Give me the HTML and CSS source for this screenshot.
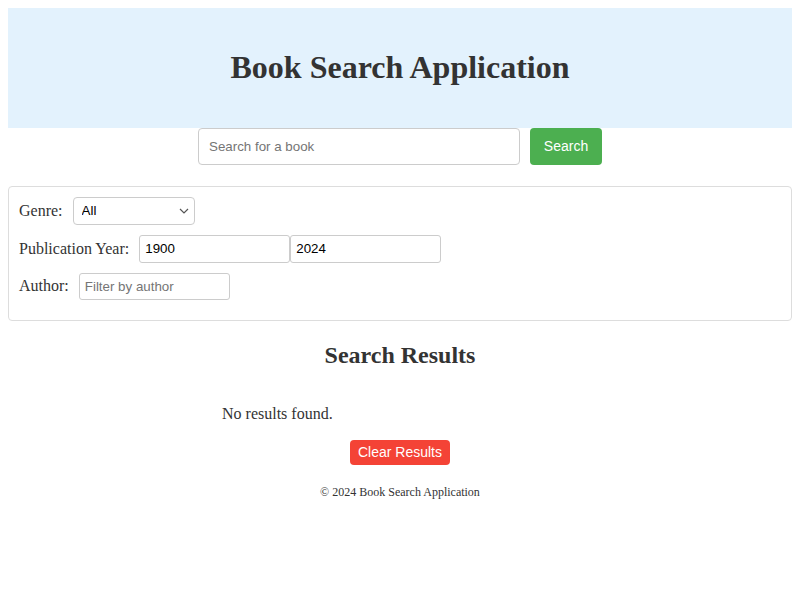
FILE: index.html
```html
<!DOCTYPE html>
<html lang="en">
<head>
<meta charset="utf-8">
<title>Book Search Application</title>
<link rel="stylesheet" href="styles.css">
</head>
<body>
<header class="header">
  <h1 class="title">Book Search Application</h1>
</header>
<div class="search-bar">
  <input class="search-input" type="text" placeholder="Search for a book">
  <button class="btn btn-search">Search</button>
</div>
<section class="filters">
  <div class="filter-row">
    <label class="filter-label">Genre:</label>
    <span class="select-wrap">
      <select class="select">
        <option>All</option>
      </select>
      <svg class="chevron" width="10" height="6" viewBox="0 0 10 6"><path d="M1 1l4 4 4-4" fill="none" stroke="#555" stroke-width="1.2"/></svg>
    </span>
  </div>
  <div class="filter-row">
    <label class="filter-label">Publication Year:</label>
    <input class="field" type="text" value="1900"><input class="field" type="text" value="2024">
  </div>
  <div class="filter-row">
    <label class="filter-label">Author:</label>
    <input class="field" type="text" placeholder="Filter by author">
  </div>
</section>
<h2 class="results-title">Search Results</h2>
<div class="results">
  <p class="no-results">No results found.</p>
</div>
<div class="clear-wrap">
  <button class="btn btn-clear">Clear Results</button>
</div>
<footer class="footer">© 2024 Book Search Application</footer>
</body>
</html>
```
FILE: styles.css
```css
body {
  margin: 8px;
  font-family: "Liberation Serif", "Times New Roman", serif;
  color: #333;
  font-size: 16px;
}
.header {
  background: #e3f2fd;
  padding: 20px;
  text-align: center;
}
.title {
  margin: 21.44px 0;
  font-size: 32px;
  line-height: 37px;
  font-weight: bold;
  color: #333;
}
.search-bar {
  display: flex;
  justify-content: center;
  gap: 10px;
  margin-bottom: 21px;
}
.search-input {
  box-sizing: border-box;
  width: 322px;
  height: 37px;
  padding: 0 10px;
  border: 1px solid #ccc;
  border-radius: 4px;
  font-family: "Liberation Sans", Arial, sans-serif;
  font-size: 13.33px;
  color: #333;
}
.search-input::placeholder, .field::placeholder {
  color: #757575;
}
.btn {
  border: none;
  border-radius: 4px;
  color: #fff;
  font-family: "Liberation Sans", Arial, sans-serif;
  font-size: 14px;
  cursor: pointer;
}
.btn-search {
  background: #4caf50;
  width: 72px;
  height: 37px;
  padding: 0;
}
.filters {
  border: 1px solid #ddd;
  border-radius: 4px;
  padding: 10px;
}
.filter-row {
  display: flex;
  align-items: center;
  margin-bottom: 10px;
}
.filter-label {
  margin-right: 10px;
  line-height: 18px;
}
.select-wrap {
  position: relative;
  display: inline-block;
}
.select {
  appearance: none;
  -webkit-appearance: none;
  box-sizing: border-box;
  width: 122px;
  height: 28px;
  padding: 0 8px;
  border: 1px solid #ccc;
  border-radius: 4px;
  background: #fff;
  font-family: "Liberation Sans", Arial, sans-serif;
  font-size: 13.33px;
  color: #000;
}
.chevron {
  position: absolute;
  right: 6px;
  top: 11px;
  pointer-events: none;
}
.field {
  box-sizing: border-box;
  width: 151px;
  height: 28px;
  padding: 0 5px;
  border: 1px solid #ccc;
  border-radius: 3px;
  font-family: "Liberation Sans", Arial, sans-serif;
  font-size: 13.33px;
  color: #000;
  margin: 0;
}
.filter-row:last-child .field {
  height: 27px;
}
.results-title {
  text-align: center;
  font-size: 24px;
  line-height: 28px;
  margin: 20px 0;
}
.results {
  display: flow-root;
  width: 356px;
  margin: 0 auto 0 214px;
}
.no-results {
  margin: 16px 0 17px;
  line-height: 18px;
}
.clear-wrap {
  display: flex;
  justify-content: center;
}
.btn-clear {
  background: #f44336;
  width: 100px;
  height: 25px;
  padding: 0;
}
.footer {
  text-align: center;
  font-size: 12px;
  line-height: 14px;
  margin-top: 20px;
}
```
